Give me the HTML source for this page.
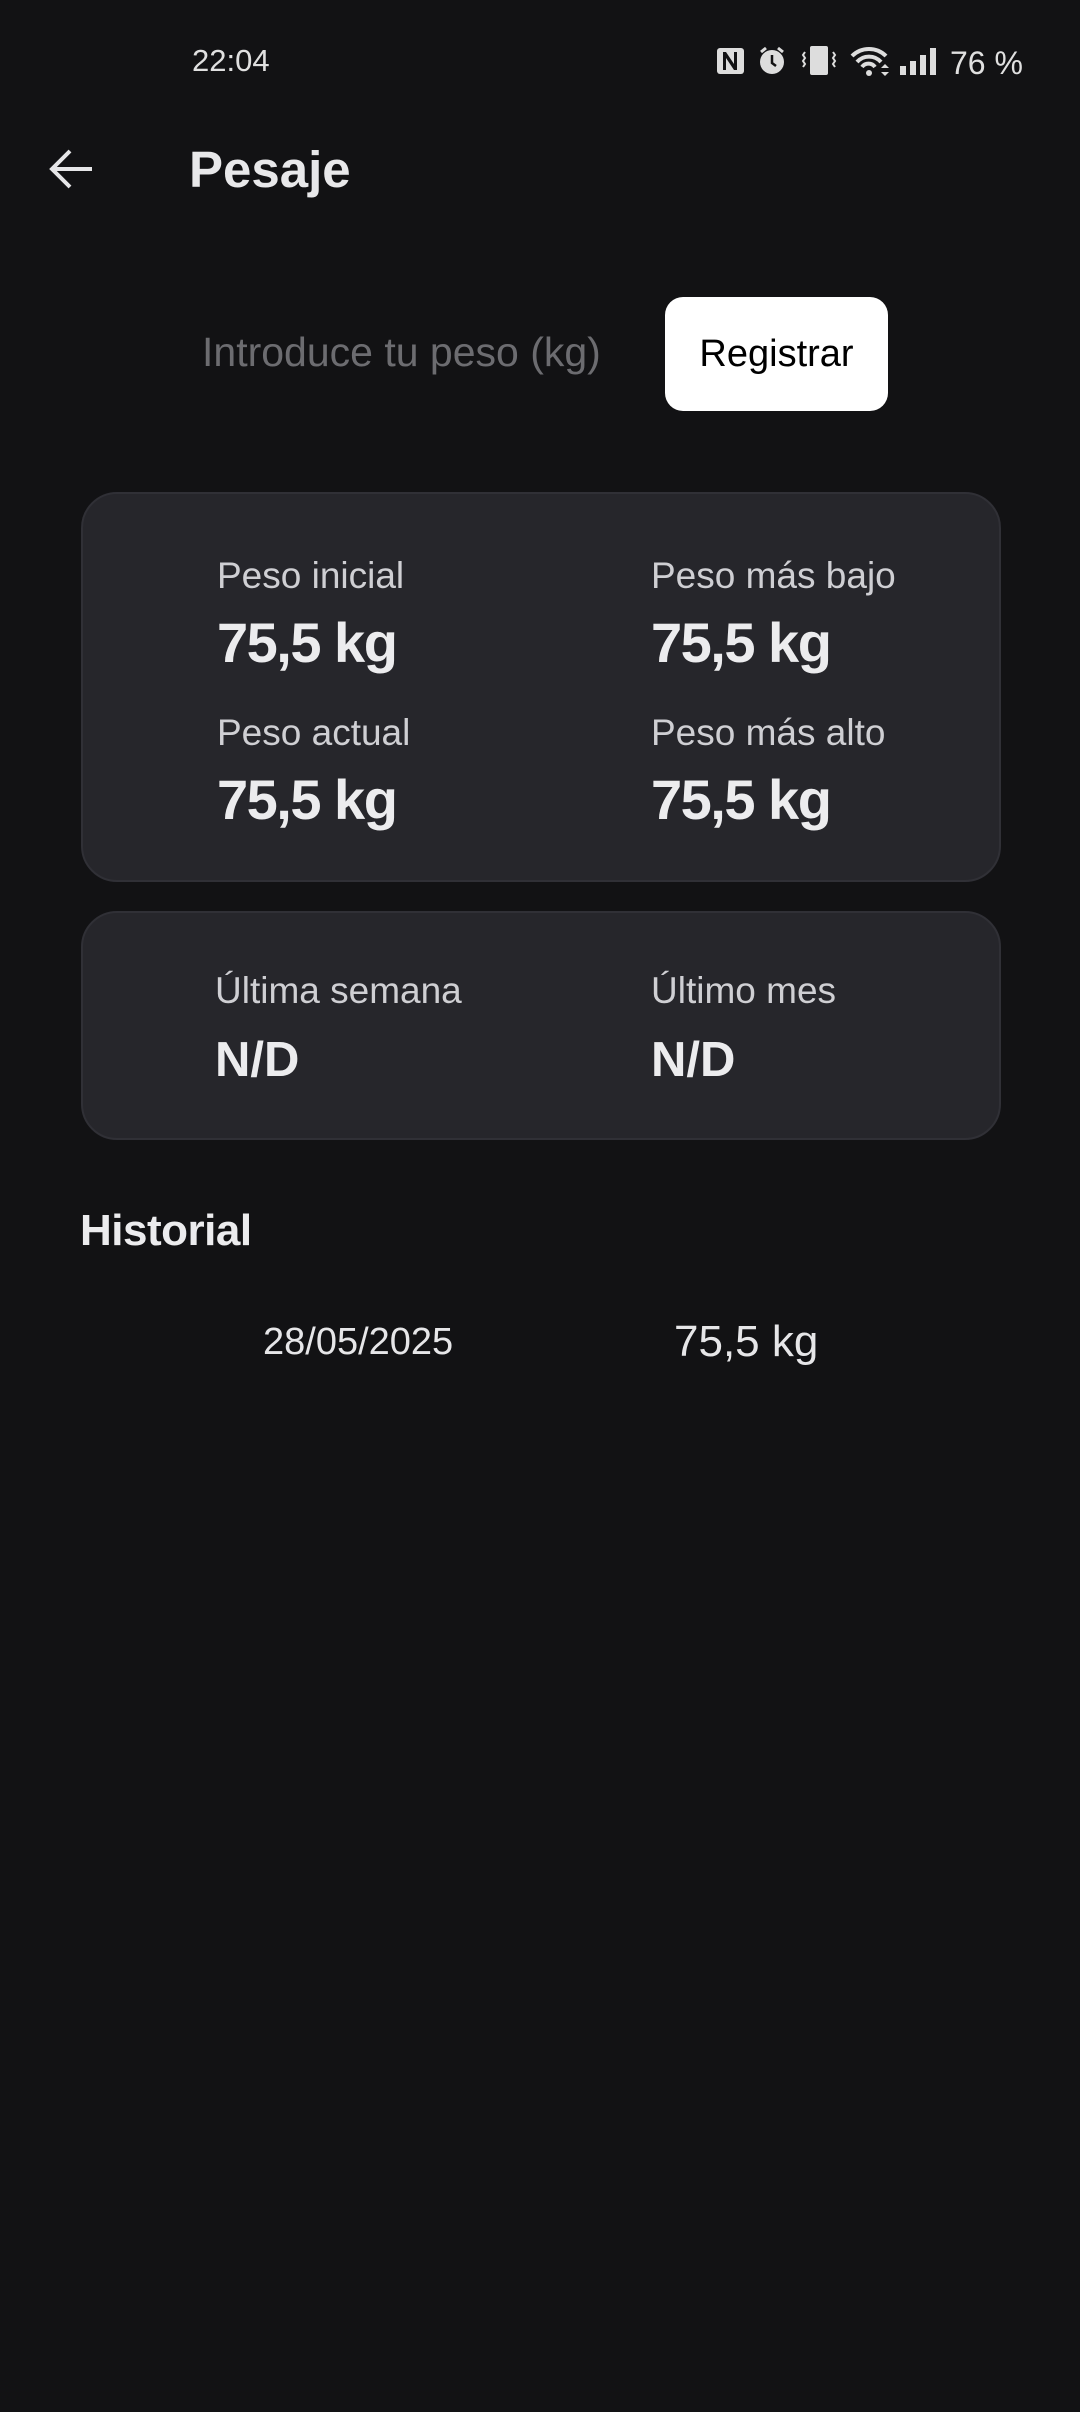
<!DOCTYPE html>
<html><head><meta charset="utf-8"><style>
*{margin:0;padding:0;box-sizing:border-box}
body{width:1080px;height:2412px;background:#121214;font-family:"Liberation Sans",sans-serif;color:#e6e6e8;position:relative;overflow:hidden}
.a{position:absolute;white-space:nowrap;line-height:1}
.card{position:absolute;left:81px;width:920px;background:#26262b;border:2px solid #303036;border-radius:36px}
.lab{font-size:37px;color:#cfcfd3}
.val{font-size:56px;font-weight:bold;color:#ececee;letter-spacing:-1.5px}
</style></head><body>
<div class="a" style="left:192px;top:45px;font-size:31px;color:#e0e0e0">22:04</div>
<svg class="a" style="left:710px;top:42px" width="320" height="40" viewBox="710 42 320 40">
<rect x="717" y="48" width="27" height="26" rx="3" fill="#ddd"/>
<path d="M723 70V52h3l8 12V52h3v18h-3l-8-12v12z" fill="#121214"/>
<circle cx="772" cy="62" r="12" fill="#ddd"/>
<path d="M761 52l5-4M783 52l-5-4" stroke="#ddd" stroke-width="3"/>
<path d="M772 55v8l4 3" stroke="#121214" stroke-width="2.5" fill="none"/>
<rect x="810" y="46" width="18" height="29" rx="2" fill="#ddd"/>
<path d="M805 52l-2 3 2 3-2 3 2 3-2 3M833 52l2 3-2 3 2 3-2 3 2 3" stroke="#ddd" stroke-width="2" fill="none"/>
<path d="M852 56a24 24 0 0 1 34 0M857 62a16 16 0 0 1 24 0M862 67a8 8 0 0 1 13 0" stroke="#ddd" stroke-width="4" fill="none"/>
<circle cx="869" cy="73" r="3" fill="#ddd"/>
<path d="M881 68l4-4 4 4zM881 72l4 4 4-4z" fill="#ddd"/>
<rect x="900" y="66" width="6" height="9" fill="#ddd"/><rect x="910" y="61" width="6" height="14" fill="#ddd"/><rect x="920" y="55" width="6" height="20" fill="#ddd"/><rect x="930" y="48" width="6" height="27" fill="#ddd"/>
<text x="950" y="74" font-size="32" fill="#e0e0e0" font-family="Liberation Sans">76 %</text>
</svg>
<svg class="a" style="left:48px;top:146px" width="48" height="48" viewBox="0 0 48 48"><path d="M44 23H6M22 5L4 23l18 18" stroke="#e6e6e8" stroke-width="4" fill="none"/></svg>
<div class="a" style="left:189px;top:144px;font-size:51px;font-weight:bold;color:#e8e8ea">Pesaje</div>
<div class="a" style="left:202px;top:332px;font-size:41px;color:#6c6c70">Introduce tu peso (kg)</div>
<div class="a" style="left:665px;top:297px;width:223px;height:114px;background:#fff;border-radius:18px;color:#000;font-size:38px;display:flex;align-items:center;justify-content:center">Registrar</div>

<div class="card" style="top:492px;height:390px"></div>
<div class="a lab" style="left:217px;top:557px">Peso inicial</div>
<div class="a val" style="left:217px;top:615px">75,5 kg</div>
<div class="a lab" style="left:651px;top:557px">Peso más bajo</div>
<div class="a val" style="left:651px;top:615px">75,5 kg</div>
<div class="a lab" style="left:217px;top:714px">Peso actual</div>
<div class="a val" style="left:217px;top:772px">75,5 kg</div>
<div class="a lab" style="left:651px;top:714px">Peso más alto</div>
<div class="a val" style="left:651px;top:772px">75,5 kg</div>

<div class="card" style="top:911px;height:229px"></div>
<div class="a lab" style="left:215px;top:972px">Última semana</div>
<div class="a" style="left:215px;top:1036px;font-size:49px;font-weight:bold;color:#ececee">N/D</div>
<div class="a lab" style="left:651px;top:972px">Último mes</div>
<div class="a" style="left:651px;top:1036px;font-size:49px;font-weight:bold;color:#ececee">N/D</div>

<div class="a" style="left:80px;top:1209px;font-size:44px;font-weight:bold;color:#ececee;letter-spacing:-0.5px">Historial</div>
<div class="a" style="left:263px;top:1323px;font-size:38px;color:#e6e6e8">28/05/2025</div>
<div class="a" style="left:674px;top:1320px;font-size:44px;color:#e6e6e8">75,5 kg</div>
</body></html>
